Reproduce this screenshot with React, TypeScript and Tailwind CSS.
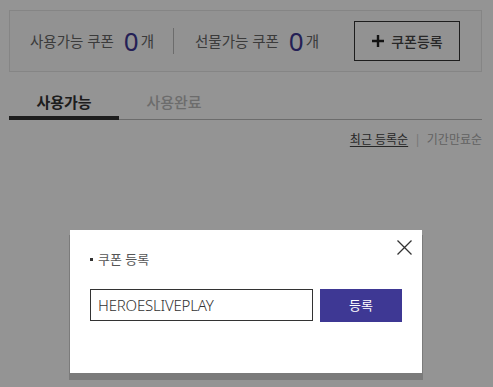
import React from "react";

export default function App() {
  return (
    <div className="relative w-[493px] h-[387px] overflow-hidden bg-white font-['Noto_Sans','Noto_Sans_CJK_KR',sans-serif]">
      <div className="ml-[9px] w-[473px] pt-[10px]">
        {/* summary box */}
        <div className="flex h-[62px] items-center border border-[#e5e5e5] bg-[#fbfbfb] pl-[20px]">
          <span className="text-[14.5px] leading-[20px] text-[#666]">사용가능 쿠폰</span>
          <span className="ml-[10px] text-[26px] leading-[28px] text-[#3e3894]">0</span>
          <span className="ml-[2px] text-[14.5px] leading-[20px] text-[#666]">개</span>
          <span className="ml-[19px] h-[26px] w-px bg-[#bbb]" />
          <span className="ml-[21px] text-[14.5px] leading-[20px] text-[#666]">선물가능 쿠폰</span>
          <span className="ml-[10px] text-[26px] leading-[28px] text-[#3e3894]">0</span>
          <span className="ml-[2px] text-[14.5px] leading-[20px] text-[#666]">개</span>
          <button className="ml-auto mr-[21px] flex h-[40px] w-[106px] items-center justify-center gap-[6px] border border-[#333] text-[14px] font-medium text-[#444]">
            <svg width="14" height="14" viewBox="0 0 14 14">
              <path d="M7 1v12M1 7h12" stroke="#222" strokeWidth="2.4" />
            </svg>
            <span>쿠폰등록</span>
          </button>
        </div>

        {/* tabs */}
        <div className="mt-[10px] flex h-[38px] border-b border-[#bbb]">
          <div className="-mb-px flex h-[38px] w-[110px] justify-center border-b-4 border-[#333] pt-[9px] text-[15px] font-bold leading-[22px] text-[#333]">
            사용가능
          </div>
          <div className="flex h-[37px] w-[110px] justify-center pt-[9px] text-[15px] font-medium leading-[22px] text-[#bbb]">
            사용완료
          </div>
        </div>

        {/* sort */}
        <div className="mt-[11px] flex justify-end text-[12px] leading-[18px]">
          <span className="text-[#444] underline underline-offset-2">최근 등록순</span>
          <span className="mx-[6px] text-[#ccc]">|</span>
          <span className="text-[#aaa]">기간만료순</span>
        </div>
      </div>

      {/* overlay */}
      <div className="absolute inset-0 bg-black/[0.42]" />

      {/* modal */}
      <div className="absolute left-[70px] top-[230px] h-[143px] w-[352px] bg-white px-[20px] pt-[20px] shadow-[0_6px_0_1px_rgba(0,0,0,0.17)]">
        <button className="absolute right-[10px] top-[10px] flex h-[15px] w-[15px] items-center justify-center">
          <svg width="15" height="15" viewBox="0 0 15 15">
            <path d="M0.5 0.5L14.5 14.5M14.5 0.5L0.5 14.5" stroke="#333" strokeWidth="1.3" />
          </svg>
        </button>
        <div className="flex items-center text-[13px] leading-[18px] text-[#555]">
          <span className="mr-[5px] h-[3px] w-[3px] bg-[#333]" />
          <span>쿠폰 등록</span>
        </div>
        <div className="mt-[21px] flex items-start gap-[7px]">
          <div className="flex h-[32px] w-[223px] items-center border border-[#333] pl-[7px] text-[15px] font-light tracking-[-0.2px] text-[#333]">
            HEROESLIVEPLAY
          </div>
          <button className="flex h-[33px] w-[82px] items-center justify-center bg-[#3e3894] text-[13px] text-white">
            등록
          </button>
        </div>
      </div>
    </div>
  );
}
